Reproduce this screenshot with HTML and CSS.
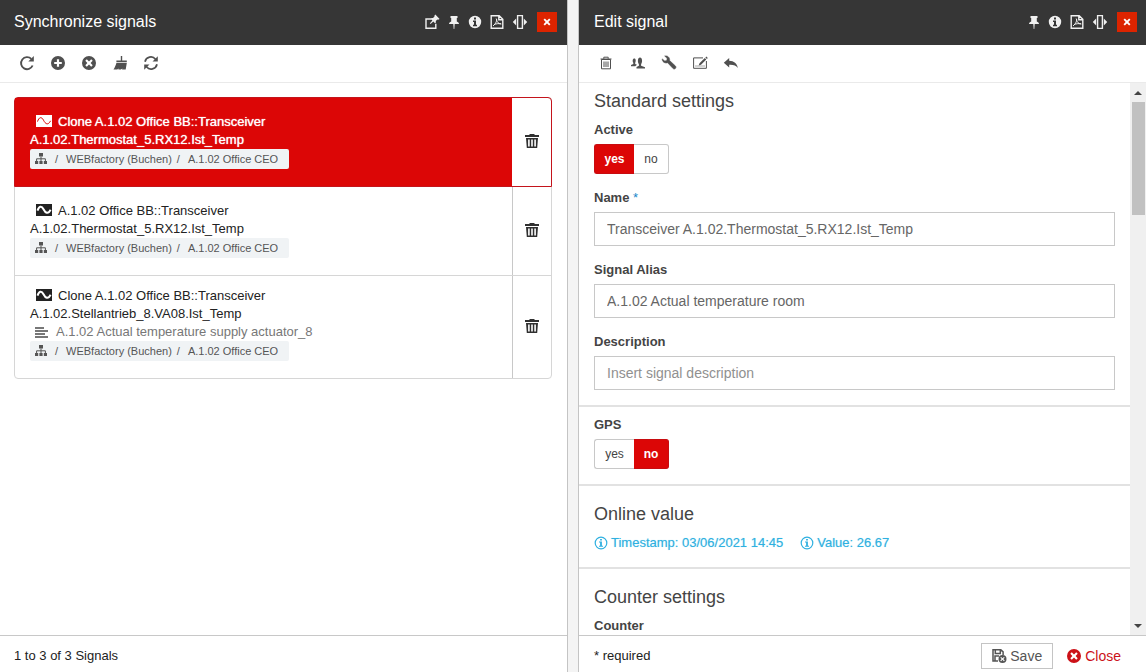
FILE: index.html
```html
<!DOCTYPE html>
<html lang="en">
<head>
<meta charset="utf-8">
<title>Synchronize signals</title>
<link rel="stylesheet" href="styles.css">
</head>
<body>
<svg class="sprite" aria-hidden="true">
  <symbol id="external" viewBox="0 0 16 16"><path d="M7.500 5H2v9.200h9.800V9.800" fill="none" stroke="currentColor" stroke-width="1.400"/><path d="M11.300.6 15.600 4.900l-1.500.8-.8-.2-1.500 1.500.1 1.500-.9.700-1.700-1.700L6.600 10l-.7-.7 2.500-2.700-1.600-1.700.7-.9 1.500.1 1.500-1.500-.1-.8z"/></symbol>
  <symbol id="pin" viewBox="0 0 12 16"><path d="M2.500 2h7v2H8.800v3.500c1.300.4 2.200 1.300 2.200 2.500H6.700L6.300 15h-.6l-.4-5H1c0-1.200.9-2.100 2.200-2.500V4h-.7z"/></symbol>
  <symbol id="info" viewBox="0 0 14 14"><path fill-rule="evenodd" d="M7 .8a6.200 6.200 0 1 0 0 12.400A6.200 6.200 0 0 0 7 .8zM6 2.500h2v2H6zM5 5.500h3v4.300h1v1.400H5V9.800h1V6.900H5z"/></symbol>
  <symbol id="pdf" viewBox="0 0 14 16"><path d="M1.200 1.700h8l3.600 3.600v9H1.200zM8.800 2v3.700h3.700" fill="none" stroke="currentColor" stroke-width="1.400"/><path d="M6.200 4.500c1.200 1.200 0 5-3.200 7.500M6.400 5c.2 3 2.200 5 5 5M4 10.700c2-1 4.200-1.300 7-.9" fill="none" stroke="currentColor"/></symbol>
  <symbol id="width" viewBox="0 0 16 16"><path d="M5.600 1.600h4.800v12.800H5.600z" fill="none" stroke="currentColor" stroke-width="1.400"/><path d="M4.200 4.500v7L.8 8zM11.800 4.500v7L15.200 8z"/></symbol>
  <symbol id="cross" viewBox="0 0 8 8"><path d="m1.200 1.200 5.600 5.600m0-5.600L1.200 6.800" stroke="currentColor" stroke-width="1.900"/></symbol>
  <symbol id="reload" viewBox="0 0 16 16"><path d="M13.600 10.500A6 6 0 1 1 12.300 3.900" fill="none" stroke="currentColor" stroke-width="1.900"/><path d="M14.800 1v5.500H9.300z"/></symbol>
  <symbol id="add" viewBox="0 0 16 16"><path fill-rule="evenodd" d="M8 1a7 7 0 1 0 0 14A7 7 0 0 0 8 1zM6.900 4.200h2.200v2.700h2.700v2.200H9.100v2.700H6.900V9.100H4.200V6.900h2.700z"/></symbol>
  <symbol id="remove" viewBox="0 0 16 16"><path fill-rule="evenodd" d="M8 1a7 7 0 1 0 0 14A7 7 0 0 0 8 1zM5.800 4.300 8 6.400l2.200-2.100 1.500 1.500L9.600 8l2.100 2.200-1.500 1.500L8 9.600l-2.200 2.100-1.500-1.500L6.400 8 4.300 5.800z"/></symbol>
  <symbol id="broom" viewBox="0 0 16 16"><path d="M8.800 1h1.400v4.500h4.600v1.700H4.400V5.500h4.400zM4.400 8h10.400l-1.100 6.500H10l.5-1-1.700 1H6.300l.5-1-1.600 1H1.500C2.900 12.500 3.700 10.300 4.400 8z"/></symbol>
  <symbol id="sync" viewBox="0 0 16 16"><path d="M2 6.700A6 6 0 0 1 12.500 4.200M14 9.300A6 6 0 0 1 3.500 11.800" fill="none" stroke="currentColor" stroke-width="1.700"/><path d="M14.800 1.200v5.300H9.500zM1.200 14.800V9.500h5.300z"/></symbol>
  <symbol id="bin" viewBox="0 0 16 16"><path d="M3.500 4.500h9v9.300h-9zM2.500 4h11M5.800 3.800V2.200h4.400v1.600M6 6.500v5.500M8 6.500v5.500M10 6.500v5.500" fill="none" stroke="currentColor"/></symbol>
  <symbol id="users" viewBox="0 0 16 16"><path d="M6.500 13.500V12l2.400-1.300V9.200C7.300 7.400 7.600 2.600 10 2.600s2.700 4.800 1.100 6.600v1.500l3.900 1.500v1.300zM1 11.300v-1.200l2.300-1.200V7.800C2.300 6.300 2.500 3.500 4.400 3.500c1.600 0 1.600 2.800.8 4.300v1.100l1.800.8-1.800 1.600z"/></symbol>
  <symbol id="wrench" viewBox="0 0 16 16"><path d="M1.200 3.900 3.800 6.100 5.900 5.500 6.100 3.300 3.700 1C6.600.4 9 2.500 8.600 5.500l5.900 5.600c1.400 1.500-.8 3.900-2.400 2.500L6.600 7.700C3.800 8.600 1 6.700 1.200 3.900z" stroke="currentColor" stroke-width=".6"/></symbol>
  <symbol id="edit" viewBox="0 0 16 16"><path d="M11 2.900H1.600v10.400h12.800V6" fill="none" stroke="currentColor"/><path d="M7.500 8.300 12.800 3l1.500 1.500L9 9.700l-2.300.9zM13.400 2.400l.9-.9L15.800 3l-.9.900z"/><path d="M3.500 11h9" stroke="currentColor" stroke-dasharray="1 1"/></symbol>
  <symbol id="back" viewBox="0 0 16 16"><path d="M6.200 3v2.800c4.800.2 8 2.600 8.600 7.200-1.700-2.600-4.300-3.500-8.600-3.300v2.800L.8 7.700z"/></symbol>
  <symbol id="wave" viewBox="0 0 16 12"><path class="wave-box" d="M0 0h16v12H0z"/><path class="wave-line" d="M1.500 6.600C3 2 5.500 1.300 7.500 5.200S12 10.700 14.600 5.800" fill="none"/></symbol>
  <symbol id="tree" viewBox="0 0 12 12"><path d="M4 0h4v3.500H4zM0 8h3.200v3H0zM4.400 8h3.200v3H4.400zM8.800 8H12v3H8.800z"/><path d="M6 3.500V8M1.600 8V5.800h8.800V8" fill="none" stroke="currentColor"/></symbol>
  <symbol id="lines" viewBox="0 0 13 11"><path d="M0 0h9v2H0zM0 3h13v2H0zM0 6h10v2H0zM0 9h13v2H0z"/></symbol>
  <symbol id="trash" viewBox="0 0 14 14"><path d="M4.500 0h5v1H14v2H0V1h4.500zM1 4h12l-.8 10H1.800z"/><path d="M3.900 5.500v7M7 5.500v7M10.100 5.500v7" stroke="#fff" stroke-width="1.600"/></symbol>
  <symbol id="info-line" viewBox="0 0 14 14"><circle cx="7" cy="7" r="5.800" fill="none" stroke="currentColor" stroke-width="1.200"/><path d="M6.100 2.900h1.800v1.500H6.100zM5 5.500h2.900v4.300H9v1H5v-1h1.100V6.500H5z"/></symbol>
  <symbol id="disk" viewBox="0 0 16 16"><path d="M7 13H2V1.700h7.800l2.300 2.200V7M4.300 2v3.500h5V2M4 13V8h4" fill="none" stroke="currentColor" stroke-width="1.500"/><path fill-rule="evenodd" d="M11.500 7a4 4 0 1 0 0 8 4 4 0 0 0 0-8zm-1.400 1.900 1.400 1.300 1.400-1.300.8.800-1.400 1.300 1.400 1.400-.8.800-1.400-1.400-1.400 1.400-.8-.8 1.400-1.400-1.400-1.300z"/></symbol>
</svg>

<div class="workspace">
  <section class="panel panel-list">
    <header class="titlebar">
      <h1 class="title">Synchronize signals</h1>
      <button class="tool" aria-label="Open in new window"><svg class="icon"><use href="#external"/></svg></button>
      <button class="tool" aria-label="Pin"><svg class="icon icon-slim"><use href="#pin"/></svg></button>
      <button class="tool" aria-label="Info"><svg class="icon icon-mid"><use href="#info"/></svg></button>
      <button class="tool" aria-label="PDF"><svg class="icon icon-pdf"><use href="#pdf"/></svg></button>
      <button class="tool" aria-label="Panel width"><svg class="icon"><use href="#width"/></svg></button>
      <button class="tool dismiss" aria-label="Close panel"><svg class="icon-small"><use href="#cross"/></svg></button>
    </header>
    <nav class="toolbar">
      <button class="tool" aria-label="Reload"><svg class="icon"><use href="#reload"/></svg></button>
      <button class="tool" aria-label="Add"><svg class="icon"><use href="#add"/></svg></button>
      <button class="tool" aria-label="Remove"><svg class="icon"><use href="#remove"/></svg></button>
      <button class="tool" aria-label="Clean up"><svg class="icon"><use href="#broom"/></svg></button>
      <button class="tool" aria-label="Synchronize"><svg class="icon"><use href="#sync"/></svg></button>
    </nav>
    <div class="list-area">
      <ul class="signals">
        <li class="signal selected">
          <div class="signal-body">
            <div class="signal-name"><svg class="wave"><use href="#wave"/></svg>Clone A.1.02 Office BB::Transceiver<br>A.1.02.Thermostat_5.RX12.Ist_Temp</div>
            <div class="crumbs"><svg class="tree"><use href="#tree"/></svg><span>/</span><span class="crumb">WEBfactory (Buchen)</span><span>/</span><span class="crumb">A.1.02 Office CEO</span></div>
          </div>
          <button class="delete" aria-label="Delete"><svg class="icon-mid"><use href="#trash"/></svg></button>
        </li>
        <li class="signal">
          <div class="signal-body">
            <div class="signal-name"><svg class="wave"><use href="#wave"/></svg>A.1.02 Office BB::Transceiver<br>A.1.02.Thermostat_5.RX12.Ist_Temp</div>
            <div class="crumbs"><svg class="tree"><use href="#tree"/></svg><span>/</span><span class="crumb">WEBfactory (Buchen)</span><span>/</span><span class="crumb">A.1.02 Office CEO</span></div>
          </div>
          <button class="delete" aria-label="Delete"><svg class="icon-mid"><use href="#trash"/></svg></button>
        </li>
        <li class="signal with-alias">
          <div class="signal-body">
            <div class="signal-name"><svg class="wave"><use href="#wave"/></svg>Clone A.1.02 Office BB::Transceiver<br>A.1.02.Stellantrieb_8.VA08.Ist_Temp</div>
            <div class="alias"><svg class="lines"><use href="#lines"/></svg>A.1.02 Actual temperature supply actuator_8</div>
            <div class="crumbs"><svg class="tree"><use href="#tree"/></svg><span>/</span><span class="crumb">WEBfactory (Buchen)</span><span>/</span><span class="crumb">A.1.02 Office CEO</span></div>
          </div>
          <button class="delete" aria-label="Delete"><svg class="icon-mid"><use href="#trash"/></svg></button>
        </li>
      </ul>
    </div>
    <footer class="footer"><span>1 to 3 of 3 Signals</span></footer>
  </section>

  <section class="panel panel-edit">
    <header class="titlebar">
      <h1 class="title">Edit signal</h1>
      <button class="tool" aria-label="Pin"><svg class="icon icon-slim"><use href="#pin"/></svg></button>
      <button class="tool" aria-label="Info"><svg class="icon icon-mid"><use href="#info"/></svg></button>
      <button class="tool" aria-label="PDF"><svg class="icon icon-pdf"><use href="#pdf"/></svg></button>
      <button class="tool" aria-label="Panel width"><svg class="icon"><use href="#width"/></svg></button>
      <button class="tool dismiss" aria-label="Close panel"><svg class="icon-small"><use href="#cross"/></svg></button>
    </header>
    <nav class="toolbar">
      <button class="tool tool-wide" aria-label="Delete"><svg class="icon"><use href="#bin"/></svg></button>
      <button class="tool" aria-label="Users"><svg class="icon"><use href="#users"/></svg></button>
      <button class="tool" aria-label="Settings"><svg class="icon"><use href="#wrench"/></svg></button>
      <button class="tool" aria-label="Edit"><svg class="icon"><use href="#edit"/></svg></button>
      <button class="tool" aria-label="Back"><svg class="icon"><use href="#back"/></svg></button>
    </nav>
    <div class="viewport">
      <form class="form" id="signal-form">
        <section class="group group-first">
          <h2 class="heading">Standard settings</h2>
          <div class="field">
            <span class="label" id="active-label">Active</span>
            <div class="toggle" role="group" aria-labelledby="active-label">
              <button type="button" class="option option-yes on" aria-pressed="true">yes</button><button type="button" class="option option-no" aria-pressed="false">no</button>
            </div>
          </div>
          <div class="field">
            <label class="label" for="name">Name <span class="star">*</span></label>
            <input class="input" id="name" type="text" value="Transceiver A.1.02.Thermostat_5.RX12.Ist_Temp">
          </div>
          <div class="field">
            <label class="label" for="alias">Signal Alias</label>
            <input class="input" id="alias" type="text" value="A.1.02 Actual temperature room">
          </div>
          <div class="field">
            <label class="label" for="description">Description</label>
            <input class="input" id="description" type="text" placeholder="Insert signal description">
          </div>
        </section>
        <section class="group group-tight">
          <div class="field">
            <span class="label" id="gps-label">GPS</span>
            <div class="toggle" role="group" aria-labelledby="gps-label">
              <button type="button" class="option option-yes" aria-pressed="false">yes</button><button type="button" class="option option-no on" aria-pressed="true">no</button>
            </div>
          </div>
        </section>
        <section class="group">
          <h2 class="heading">Online value</h2>
          <div class="readings">
            <span class="reading"><svg class="icon-mid"><use href="#info-line"/></svg>Timestamp: 03/06/2021 14:45</span>
            <span class="reading"><svg class="icon-mid"><use href="#info-line"/></svg>Value: 26.67</span>
          </div>
        </section>
        <section class="group">
          <h2 class="heading">Counter settings</h2>
          <span class="label">Counter</span>
        </section>
      </form>
      <div class="scrollbar" aria-hidden="true">
        <span class="arrow arrow-up"></span>
        <span class="track"><span class="thumb"></span></span>
        <span class="arrow arrow-down"></span>
      </div>
    </div>
    <footer class="footer">
      <span class="required">* required</span>
      <button class="save" form="signal-form"><svg class="icon"><use href="#disk"/></svg>Save</button>
      <button class="close"><svg class="icon"><use href="#remove"/></svg>Close</button>
    </footer>
  </section>
</div>
</body>
</html>
```
FILE: styles.css
```css
* { box-sizing: border-box; }

body {
  margin: 0;
  font: 13px/18px "Liberation Sans", Arial, sans-serif;
  color: #222;
  background: #f4f4f4;
}

button { font: inherit; color: inherit; background: none; border: 0; padding: 0; }
svg { display: block; fill: currentColor; }

.sprite { position: absolute; width: 0; height: 0; }

.workspace {
  display: grid;
  grid-template-columns: 1fr 1fr;
  gap: 10px;
  height: 100vh;
}

.panel {
  display: flex;
  flex-direction: column;
  min-width: 0;
  min-height: 0;
  background: #fff;
}
.panel-list { border-right: 1px solid #c4c4c4; }
.panel-edit { border-left: 1px solid #c4c4c4; }

.titlebar {
  display: flex;
  align-items: center;
  gap: 8px;
  flex: 0 0 45px;
  padding: 0 10px 1px 14px;
  color: #f0f0f0;
  background: #363636;
}
.panel-edit .titlebar { padding: 0 9px 1px 15px; }
.title { flex: 1; margin: 0; font-size: 16px; font-weight: 400; color: #fff; }

.tool { display: flex; align-items: center; justify-content: center; }
.tool-wide { width: 18px; }
.icon { width: 16px; height: 16px; }
.icon-slim { width: 12px; }
.icon-mid { width: 14px; height: 14px; }
.icon-pdf { width: 14px; }
.icon-small { width: 8px; height: 8px; }
.dismiss { width: 20px; height: 20px; margin-left: 1px; color: #fff; background: #dc2400; }

.toolbar {
  display: flex;
  align-items: center;
  gap: 15px;
  flex: 0 0 38px;
  padding: 0 18px 1px;
  color: #505050;
  border-bottom: 1px solid #eaeaea;
}
.panel-list .toolbar { padding: 0 19px 1px; }

.list-area { flex: 1; min-height: 0; overflow: auto; padding: 14px 15px 14px 14px; }
.signals {
  margin: 0;
  padding: 0;
  list-style: none;
  border: 1px solid #d6d6d6;
  border-radius: 4px;
}
.signal { display: flex; border-bottom: 1px solid #d6d6d6; }
.signal:last-child { border-bottom: 0; }
.signal-body { flex: 1; padding: 15px 15px 17px; }
.with-alias .signal-body { padding-top: 11px; }
.selected { margin: -1px -1px 0; border: 1px solid #c4141c; border-radius: 4px 4px 0 0; }
.selected .signal-body { background: #dc0606; }
.selected .signal-name { color: #fff; text-shadow: 0 0 1px #fff; }

.wave {
  --box: #222;
  --line: #fff;
  --stroke: 2px;
  display: inline-block;
  width: 16px;
  height: 12px;
  margin: 0 6px;
  vertical-align: -1px;
}
.selected .wave { --box: #fff; --line: #dc0606; --stroke: 1px; }
.wave-box { fill: var(--box); }
.wave-line { stroke: var(--line); stroke-width: var(--stroke); }

.alias { display: flex; align-items: center; gap: 8px; padding-left: 5px; color: #777; }
.lines { width: 13px; height: 11px; }

.crumbs {
  display: inline-flex;
  align-items: center;
  gap: 8px;
  height: 20px;
  padding: 0 11px 0 5px;
  font-size: 11px;
  color: #555;
  background: #f0f3f5;
  border-radius: 2px;
  vertical-align: top;
}
.tree { width: 12px; height: 12px; }
.crumb + span { margin-left: -3px; }

.delete {
  display: flex;
  align-items: center;
  justify-content: center;
  width: 39px;
  padding-bottom: 2px;
  color: #303030;
  border-left: 1px solid #c8c8c8;
}
.selected .delete { width: 40px; border-left-color: #dc0606; }

.footer {
  display: flex;
  align-items: center;
  flex: 0 0 37px;
  padding: 3px 14px 0;
  border-top: 1px solid #c8c8c8;
}
.panel-edit .footer { padding: 3px 25px 0 15px; }
.required { flex: 1; }

.save, .close { display: flex; align-items: center; height: 26px; font-size: 14px; }
.save { gap: 3px; padding: 0 10px 0 9px; color: #555; border: 1px solid #c4c4c4; }
.close { gap: 3px; margin-left: 13px; color: #cc1118; }

.viewport { display: flex; flex: 1; min-height: 0; }
.form { flex: 1; min-width: 0; overflow: auto; scrollbar-width: none; color: #444; }

.group { padding: 16px 15px 14px; border-bottom: 2px solid #e2e2e2; }
.group-first { padding: 6px 15px 15px; }
.group-tight { padding: 8px 15px 15px; }
.group:last-child { border-bottom: 0; }
.heading { margin: 0 0 7px; font-size: 18px; line-height: 24px; font-weight: 400; color: #444; }
.field + .field { margin-top: 14px; }
.label { display: block; margin-bottom: 4px; line-height: 20px; font-weight: 700; }
.star { font-weight: 400; color: #1687c9; }

.input {
  display: block;
  width: 100%;
  height: 34px;
  padding: 0 12px;
  font: 14px/20px "Liberation Sans", Arial, sans-serif;
  color: #666;
  background: #fff;
  border: 1px solid #c8c8c8;
  border-radius: 0;
}
.input::placeholder { color: #909090; opacity: 1; }

.toggle { display: flex; height: 30px; font-size: 12px; }
.option { border: 1px solid #c8c8c8; }
.option-yes { width: 40px; border-radius: 3px 0 0 3px; border-right: 0; }
.option-no { width: 35px; border-radius: 0 3px 3px 0; border-left: 0; }
.on { font-weight: 700; color: #fff; background: #dc0606; border-color: #c80c10; }

.readings { display: flex; gap: 17px; line-height: 20px; color: #2fb0e0; }
.reading { display: flex; align-items: center; gap: 3px; text-shadow: 0 0 1px #a0dcf2; }

.scrollbar { display: flex; flex-direction: column; flex: 0 0 16px; background: #f0f0f0; }
.arrow { display: grid; place-items: center; height: 19px; }
.arrow::before { content: ""; border: 4px solid transparent; }
.arrow-up::before { border-top: 0; border-bottom-color: #444; }
.arrow-down::before { border-bottom: 0; border-top-color: #444; }
.track { flex: 1; padding: 0 1px 0 2px; }
.thumb { display: block; height: 22%; background: #c1c1c1; }
```
